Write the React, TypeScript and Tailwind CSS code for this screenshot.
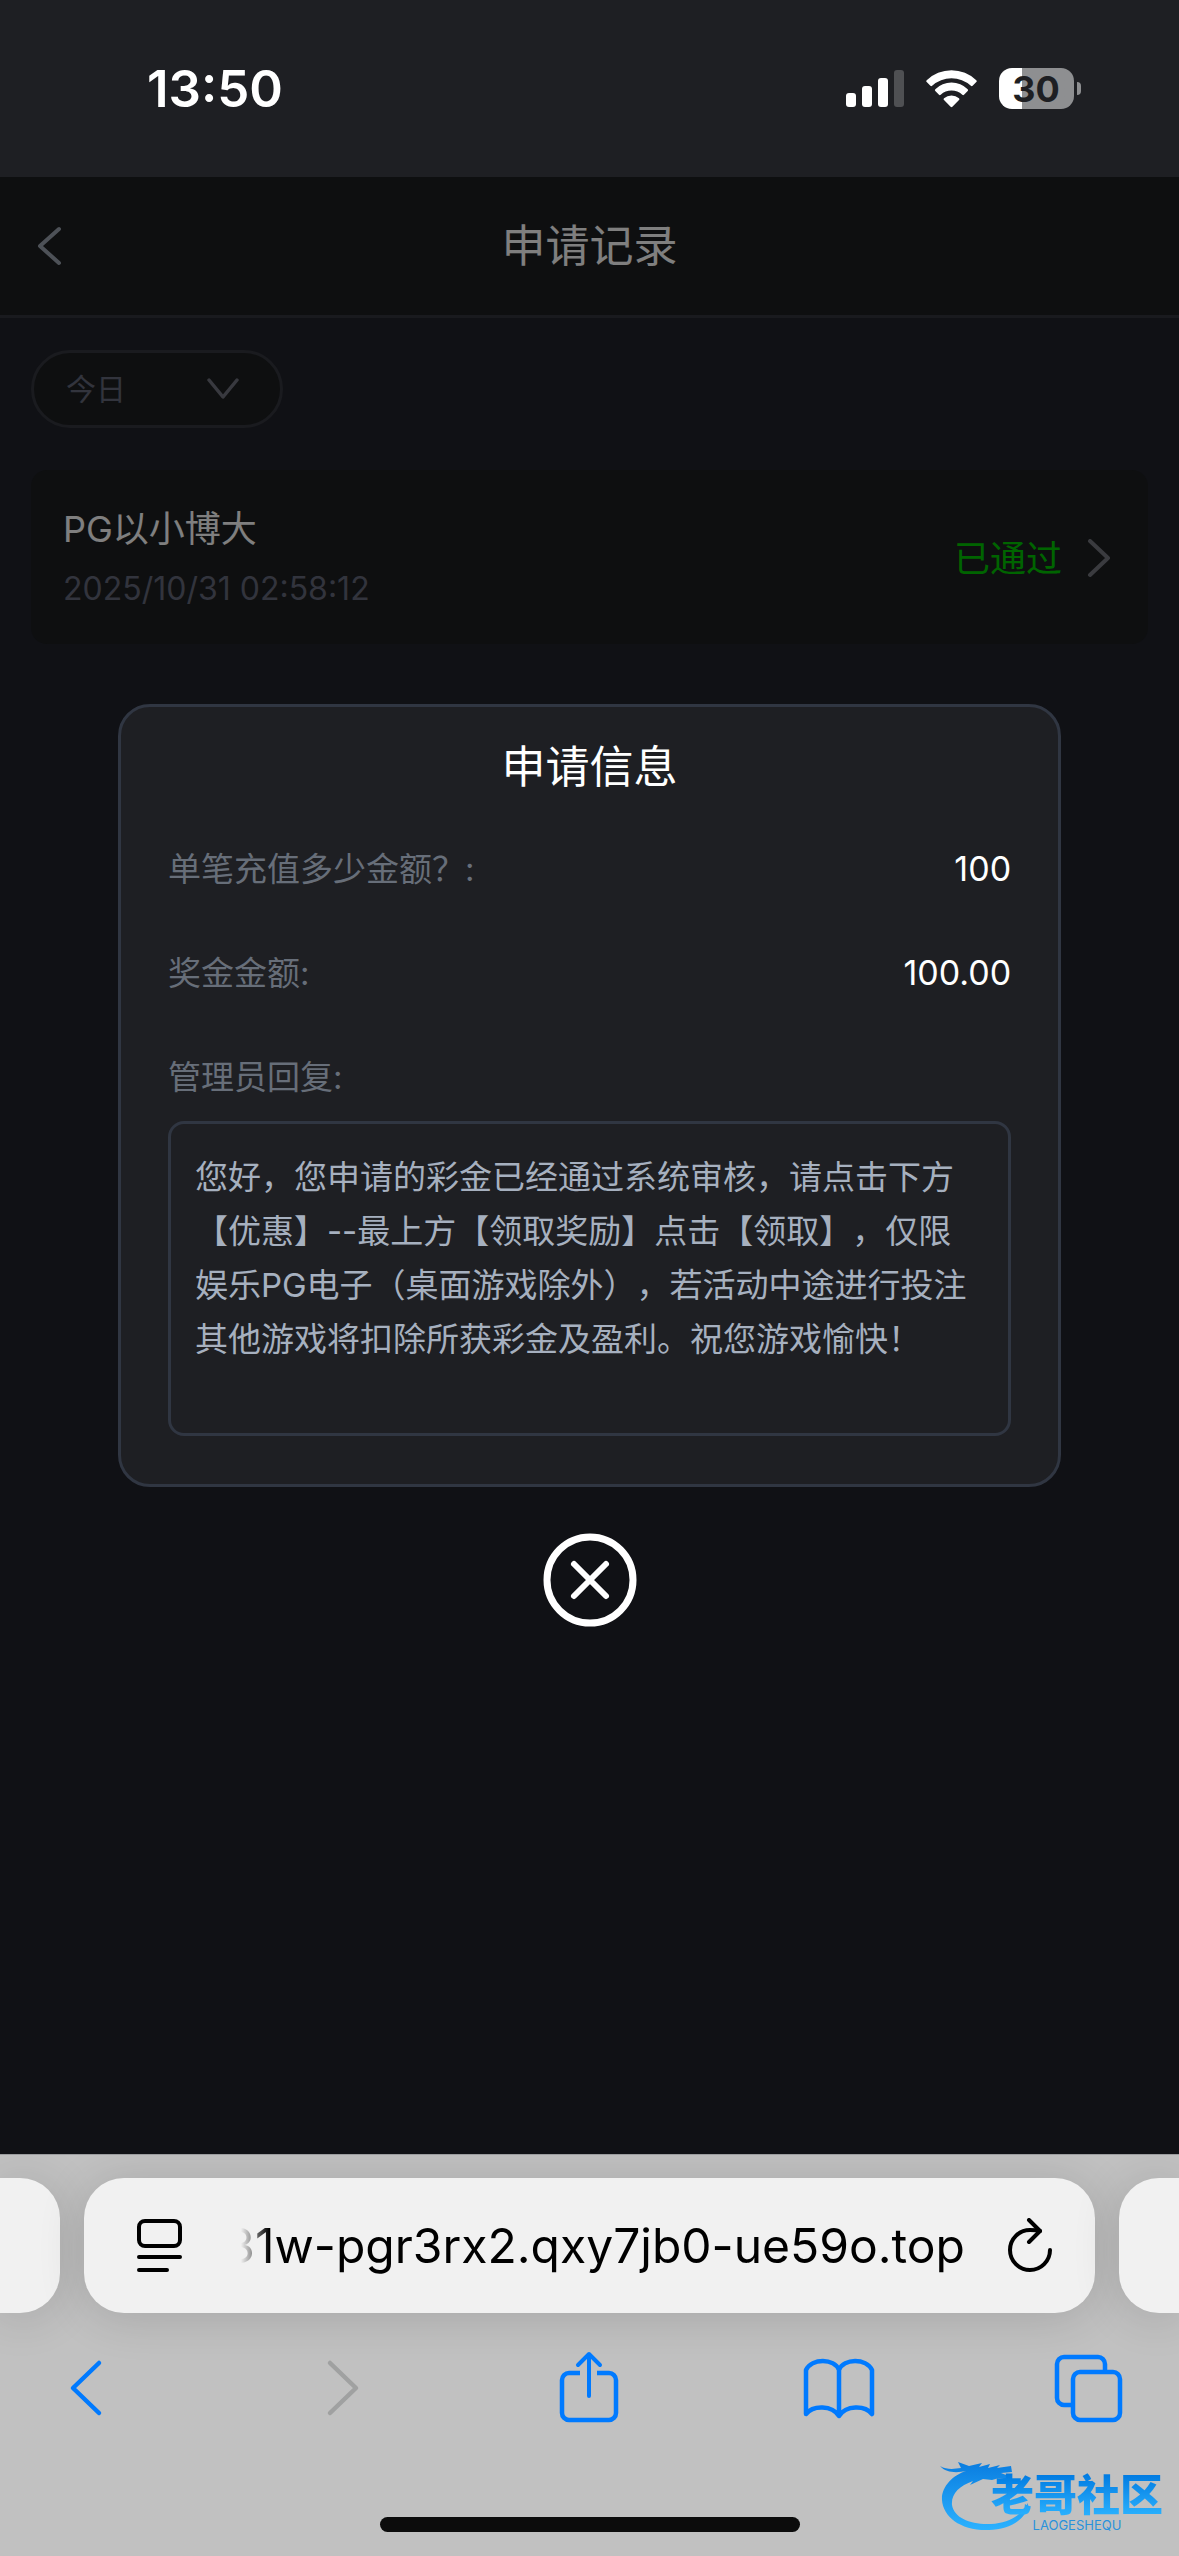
import type { ReactNode } from "react";

const details = [
  { label: "单笔充值多少金额？:", value: "100" },
  { label: "奖金金额:", value: "100.00" },
];

const reply =
  "您好，您申请的彩金已经通过系统审核，请点击下方【优惠】--最上方【领取奖励】点击【领取】，仅限娱乐PG电子（桌面游戏除外），若活动中途进行投注其他游戏将扣除所获彩金及盈利。祝您游戏愉快！";

function StatusBar() {
  return (
    <header className="flex h-[177px] items-center justify-between bg-[#1e1f23] pr-[98px] pl-[147px]">
      <span className="text-[51px] leading-none font-semibold text-white">13:50</span>
      <div className="flex items-center gap-[22px]">
        {/* Signal */}
        <svg width="58" height="38" viewBox="0 0 58 38" fill="#fff">
          <rect x="0" y="23" width="10" height="14" rx="3" />
          <rect x="16" y="16" width="10" height="21" rx="3" />
          <rect x="32" y="8" width="10" height="29" rx="3" />
          <rect x="48" y="0" width="10" height="37" rx="3" opacity="0.22" />
        </svg>
        {/* Wifi */}
        <svg width="51" height="38" viewBox="0 0 51 38" fill="#fff">
          <path d="M.7 10.3A35.5 35.5 0 0 1 50.3 10.3a1.3 1.3 0 0 1 0 1.8L46.6 15.8a1.2 1.2 0 0 1-1.7 0A29 29 0 0 0 6.1 15.8a1.2 1.2 0 0 1-1.7 0L.7 12.1a1.3 1.3 0 0 1 0-1.8Z" />
          <path d="M9.3 19.2a23 23 0 0 1 32.4 0 1.3 1.3 0 0 1 0 1.8L38 24.7a1.2 1.2 0 0 1-1.7 0 16 16 0 0 0-21.6 0 1.2 1.2 0 0 1-1.7 0L9.3 21a1.3 1.3 0 0 1 0-1.8Z" />
          <path d="M18 28.2a11.6 11.6 0 0 1 15 0 1.3 1.3 0 0 1 0 1.9l-6.6 6.6a1.3 1.3 0 0 1-1.8 0L18 30.1a1.3 1.3 0 0 1 0-1.9Z" />
        </svg>
        {/* Battery */}
        <div className="flex items-center gap-[3px]">
          <span className="flex h-[41px] w-[75px] items-center justify-center rounded-[13px] bg-linear-to-r from-white from-31% to-[#8e8f91] to-31% pr-px text-[36px] leading-none font-bold text-[#1e1f23]">
            30
          </span>
          <span className="h-[13px] w-1 rounded-r-full bg-[#8e8f91]" />
        </div>
      </div>
    </header>
  );
}

function RecordsPage() {
  return (
    <>
      <nav className="grid h-[141px] grid-cols-[1fr_auto_1fr] items-center border-b-3 border-[#32343c] bg-[#1c1e20] px-9">
        <button aria-label="返回">
          <svg width="28" height="40" viewBox="0 0 28 40" fill="none" stroke="#9aa2ae" strokeWidth="4" strokeLinecap="round" strokeLinejoin="round">
            <path d="M23 3 4 20 23 37" />
          </svg>
        </button>
        <h1 className="text-[44px] leading-[60px] text-white">申请记录</h1>
      </nav>

      <div className="flex flex-col items-start gap-[42px] px-[31px] pt-8">
        <div className="relative">
          <select
            aria-label="日期"
            className="h-[78px] w-[252px] appearance-none rounded-full border-3 border-[#34363e] bg-[#1c1e20] pl-8 text-[30px] text-[#64687a]"
          >
            <option>今日</option>
          </select>
          <svg className="pointer-events-none absolute top-7 right-11" width="32" height="22" viewBox="0 0 32 22" fill="none" stroke="#70727e" strokeWidth="3.5" strokeLinecap="round" strokeLinejoin="round">
            <path d="M2 2 16 19 30 2" />
          </svg>
        </div>

        <a href="#record" className="flex h-[174px] w-full items-center justify-between rounded-2xl bg-[#1c1e20] pt-1 pr-9 pl-8">
          <div className="flex flex-col gap-3">
            <span className="text-[36px] leading-[48px] text-white">PG以小博大</span>
            <span className="text-[32px] leading-[48px] text-[#64687a]">2025/10/31 02:58:12</span>
          </div>
          <div className="flex items-center gap-6">
            <span className="text-[36px] leading-[48px] text-[#00c800]">已通过</span>
            <svg width="26" height="40" viewBox="0 0 26 40" fill="none" stroke="#74767f" strokeWidth="4" strokeLinecap="round" strokeLinejoin="round">
              <path d="M4 2 22 19 4 36" />
            </svg>
          </div>
        </a>
      </div>
    </>
  );
}

function DetailDialog() {
  return (
    <div className="absolute inset-0 flex flex-col items-center justify-center gap-[46px] bg-black/50">
      <section role="dialog" aria-labelledby="dialog-title" className="w-4/5 rounded-[32px] border-3 border-[#303642] bg-[#1e1f23] px-[47px] pt-[30px] pb-12">
        <h2 id="dialog-title" className="mb-5 text-center text-[44px] leading-[60px] text-white">申请信息</h2>
        <dl>
          {details.map((item) => (
            <div key={item.label} className="flex justify-between py-7 leading-[48px]">
              <dt className="text-[33px] text-[#676e79]">{item.label}</dt>
              <dd className="text-[34px] text-white">{item.value}</dd>
            </div>
          ))}
        </dl>
        <label htmlFor="reply" className="mb-5 block pt-7 text-[33px] leading-[48px] text-[#676e79]">
          管理员回复:
        </label>
        <textarea
          id="reply"
          readOnly
          value={reply}
          className="block h-[315px] w-full resize-none overflow-hidden rounded-2xl border-3 border-[#303642] bg-transparent px-6 pt-[26px] text-[33px] leading-[54px] text-[#a6b0bf] [text-spacing-trim:space-all]"
        />
      </section>
      <button aria-label="关闭">
        <svg width="94" height="94" viewBox="0 0 94 94" fill="none" stroke="#fff" strokeWidth="7" strokeLinecap="round">
          <circle cx="47" cy="47" r="43" />
          <path d="M31 31 63 63M63 31 31 63" strokeWidth="6" />
        </svg>
      </button>
    </div>
  );
}

function ToolButton({ label, children }: { label: string; children: ReactNode }) {
  return (
    <button aria-label={label} className="text-[#007aff]">
      <svg width="74" height="74" viewBox="0 0 74 74" fill="none" stroke="currentColor" strokeWidth="4.5" strokeLinecap="round" strokeLinejoin="round">
        {children}
      </svg>
    </button>
  );
}

function Watermark() {
  return (
    <div className="absolute right-4 bottom-6 flex">
      <svg className="-mr-10" width="92" height="76" viewBox="0 0 92 76">
        <defs>
          <linearGradient id="dragon" x1="0" y1="0" x2="0" y2="1">
            <stop offset="0" stopColor="#0a7de0" />
            <stop offset="1" stopColor="#2bb2ff" />
          </linearGradient>
        </defs>
        <path
          fill="url(#dragon)"
          d="M1 10C8 14 15 13 22 12L19 6 30 10 43 7 40 11 51 8 49 12 61 9 58 12 72 10 73 16 62 17 72 21 70 24 60 22 53 24 44 23 31 29 34 25C20 30 12 38 13 49C15 62 32 69 52 68C70 67 83 59 89 47C90 61 72 74 50 74C22 75 4 61 3 44C2 31 14 19 27 15C18 17 7 17 1 10Z"
        />
      </svg>
      <div className="mt-4 flex flex-col items-center">
        <span className="bg-linear-to-b from-[#0078e0] to-[#2cb4ff] bg-clip-text text-[43px] leading-[46px] font-black text-transparent">老哥社区</span>
        <span className="text-[13px] leading-[14px] text-[#2a92dc]">LAOGESHEQU</span>
      </div>
    </div>
  );
}

function BrowserBar() {
  return (
    <footer className="relative overflow-hidden border-t border-[#9b9c9e] bg-[#c1c1c1] pt-[23px]">
      <div className="flex h-[135px] gap-6">
        <div className="w-15 rounded-r-[40px] bg-[#f1f1f1] shadow-[0_4px_48px_rgba(0,0,0,0.14)]" />
        <div className="flex min-w-0 flex-1 items-center rounded-[40px] bg-[#f1f1f1] pr-10 pl-[50px] shadow-[0_4px_48px_rgba(0,0,0,0.14)]">
          <button aria-label="页面菜单">
            <svg width="50" height="56" viewBox="0 0 50 56" fill="none" stroke="#000" strokeWidth="4" strokeLinecap="round">
              <rect x="5" y="3" width="41" height="25" rx="6" />
              <path d="M5 39h41M5 52h28" />
            </svg>
          </button>
          <button className="ml-[57px] flex min-w-0 flex-1 justify-end overflow-hidden text-[48px] leading-[72px] whitespace-nowrap text-black [mask-image:linear-gradient(90deg,transparent,black_28px)]">
            31w-pgr3rx2.qxy7jb0-ue59o.top
          </button>
          <button aria-label="刷新" className="ml-10">
            <svg width="50" height="56" viewBox="0 0 50 56" fill="none" stroke="#000" strokeWidth="4" strokeLinecap="round" strokeLinejoin="round">
              <path d="M45 32A20 20 0 1 1 25 12C29 12 32 12 35 13" />
              <path d="M24 2 35 13 24 24" />
            </svg>
          </button>
        </div>
        <div className="w-15 rounded-l-[40px] bg-[#f1f1f1] shadow-[0_4px_48px_rgba(0,0,0,0.14)]" />
      </div>

      <div className="flex justify-between pt-[38px] pr-[53px] pl-[50px]">
        <ToolButton label="后退">
          <path d="M49 12 23 37 49 62" />
        </ToolButton>
        <ToolButton label="前进">
          <path d="M29 12 55 37 29 62" stroke="#a0a1a1" />
        </ToolButton>
        <ToolButton label="分享">
          <path d="M29 22H18a7 7 0 0 0-7 7V62a7 7 0 0 0 7 7H58a7 7 0 0 0 7-7V29a7 7 0 0 0-7-7H46" strokeLinecap="butt" />
          <path d="M38 45V3M27 14 38 3 49 14" strokeWidth="4" />
        </ToolButton>
        <ToolButton label="书签">
          <path d="M37 19C32 7 10 7 4 19V63C11 54 30 54 37 65C44 54 63 54 70 63V19C64 7 42 7 37 19V64" />
        </ToolButton>
        <ToolButton label="标签页">
          <path d="M21 54H12a7 7 0 0 1-7-7V13a7 7 0 0 1 7-7H46a7 7 0 0 1 7 7V20" strokeLinecap="butt" />
          <rect x="21" y="21" width="47" height="48" rx="7" />
        </ToolButton>
      </div>

      <div className="mx-auto mt-[92px] mb-6 h-[15px] w-[420px] rounded-full bg-[#0c0c0c]" />
      <Watermark />
    </footer>
  );
}

export default function App() {
  return (
    <div lang="zh-CN" className="flex min-h-screen flex-col bg-[#20222a] [font-family:Inter,'Noto_Sans_CJK_SC',sans-serif]">
      <StatusBar />
      <main className="relative flex-1">
        <RecordsPage />
        <DetailDialog />
      </main>
      <BrowserBar />
    </div>
  );
}
